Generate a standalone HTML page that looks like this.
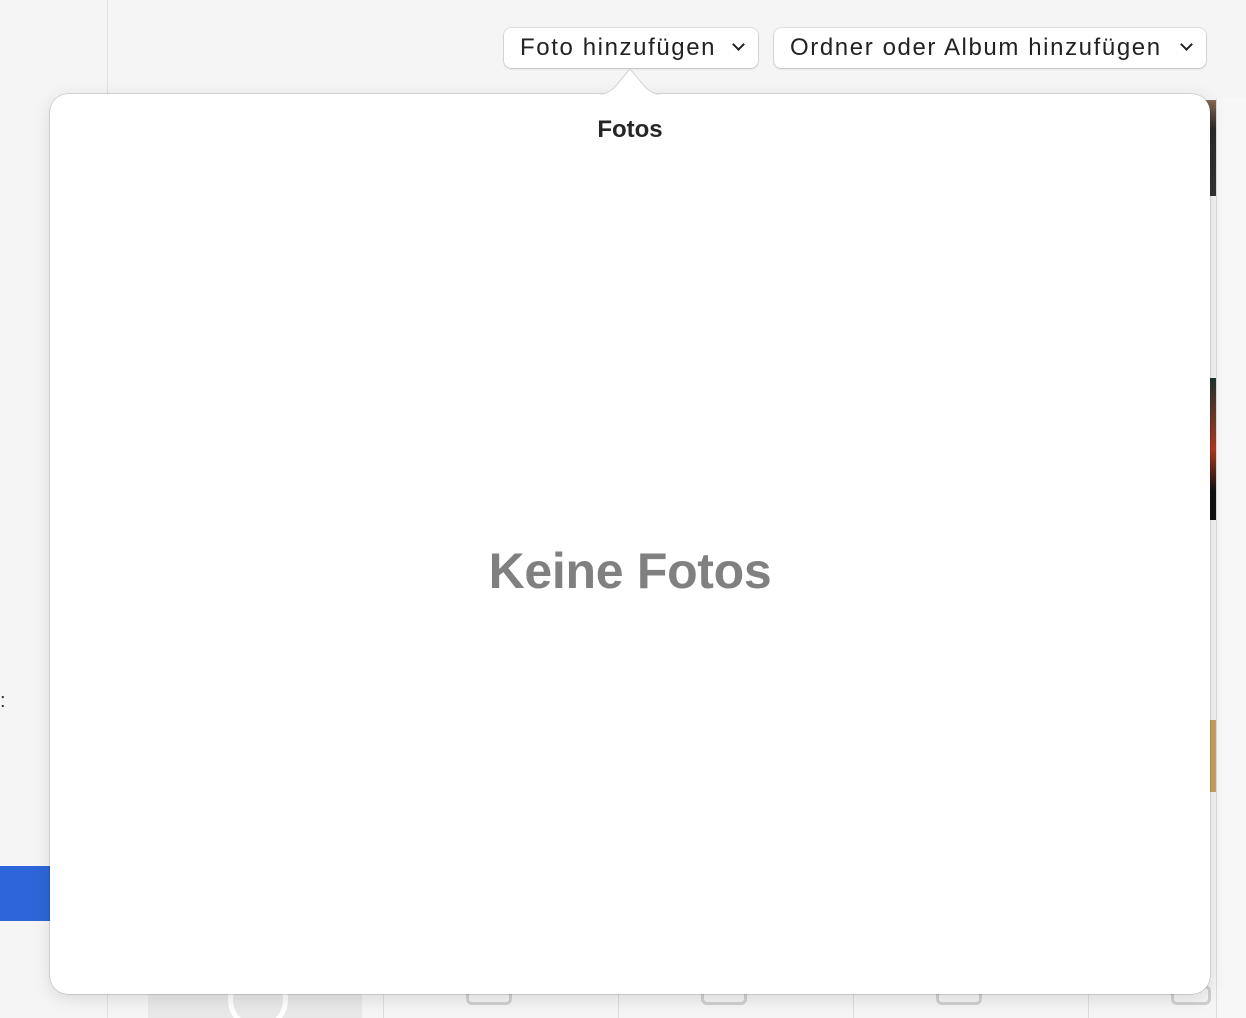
<!DOCTYPE html>
<html><head><meta charset="utf-8"><style>
html,body{margin:0;padding:0;width:1246px;height:1018px;overflow:hidden;background:#f5f5f5;font-family:"Liberation Sans",sans-serif;}
#root{position:relative;width:1246px;height:1018px;overflow:hidden}
.abs{position:absolute}
.btn{position:absolute;top:28px;height:40px;background:#fff;border-radius:7px;box-shadow:0 0 0 0.5px rgba(0,0,0,.18),0 1px 2px rgba(0,0,0,.15);font-size:24px;letter-spacing:1.6px;color:#222;line-height:40px;box-sizing:border-box;padding-left:16px;white-space:nowrap}
.chev{position:absolute;top:12px;width:7px;height:7px;border-right:2.5px solid #222;border-bottom:2.5px solid #222;transform:rotate(45deg)}
</style></head><body><div id="root">
<div class="abs" style="left:107px;top:0;width:1px;height:1018px;background:#e2e2e2"></div>
<div class="abs" style="left:0;top:866px;width:50px;height:55px;background:#2e66d9"></div>
<div class="abs" style="left:0;top:690px;font-size:20px;color:#333">:</div>
<div class="abs" style="left:1216px;top:98px;width:30px;height:920px;background:#f7f7f7;border-left:1px solid #ddd"></div>
<div class="abs" style="left:1204px;top:100px;width:12px;height:96px;background:linear-gradient(#8a6a50,#2a2a2a 30%,#333)"></div>
<div class="abs" style="left:1204px;top:378px;width:12px;height:142px;background:linear-gradient(#203530,#b03a20 50%,#111 80%)"></div>
<div class="abs" style="left:1204px;top:720px;width:12px;height:72px;background:#c9a060"></div>
<div class="abs" style="left:148px;top:990px;width:214px;height:28px;background:#e8e8e8;overflow:hidden">
  <div class="abs" style="left:80px;top:-20px;width:60px;height:60px;border:5px solid #fff;border-radius:50%;box-sizing:border-box"></div>
</div>
<div class="abs" style="left:383px;top:990px;width:1px;height:28px;background:#ddd"></div>
<div class="abs" style="left:618px;top:990px;width:1px;height:28px;background:#ddd"></div>
<div class="abs" style="left:853px;top:990px;width:1px;height:28px;background:#ddd"></div>
<div class="abs" style="left:1088px;top:990px;width:1px;height:28px;background:#ddd"></div>
<div class="abs" style="left:466px;top:985px;width:46px;height:20px;border:3px solid #d0d0d0;border-radius:6px;box-sizing:border-box"></div>
<div class="abs" style="left:701px;top:985px;width:46px;height:20px;border:3px solid #d0d0d0;border-radius:6px;box-sizing:border-box"></div>
<div class="abs" style="left:936px;top:985px;width:46px;height:20px;border:3px solid #d0d0d0;border-radius:6px;box-sizing:border-box"></div>
<div class="abs" style="left:1171px;top:985px;width:40px;height:20px;border:3px solid #d0d0d0;border-radius:6px;box-sizing:border-box"></div>
<div class="btn" style="left:504px;width:254px">Foto hinzufügen<div class="chev" style="left:230px"></div></div>
<div class="btn" style="left:774px;width:432px">Ordner oder Album hinzufügen<div class="chev" style="left:408px"></div></div>
<div class="abs" style="left:50px;top:94px;width:1160px;height:900px;background:#fff;border-radius:18px;box-shadow:0 0 0 0.5px rgba(0,0,0,.22),0 4px 18px rgba(0,0,0,.12)"></div>
<svg class="abs" style="left:596px;top:66px" width="68" height="30"><path d="M0 29 Q10 29 18 22 L34 3 L50 22 Q58 29 68 29 Z" fill="#fff" stroke="#c8c8c8" stroke-width="0.8"/><rect x="0" y="28.5" width="68" height="2" fill="#fff"/></svg>
<div class="abs" style="left:50px;top:116px;width:1160px;text-align:center;font-size:24px;font-weight:bold;color:#262626">Fotos</div>
<div class="abs" style="left:50px;top:542px;width:1160px;text-align:center;font-size:50px;font-weight:bold;color:#808080;letter-spacing:-0.3px">Keine Fotos</div>
</div></body></html>
